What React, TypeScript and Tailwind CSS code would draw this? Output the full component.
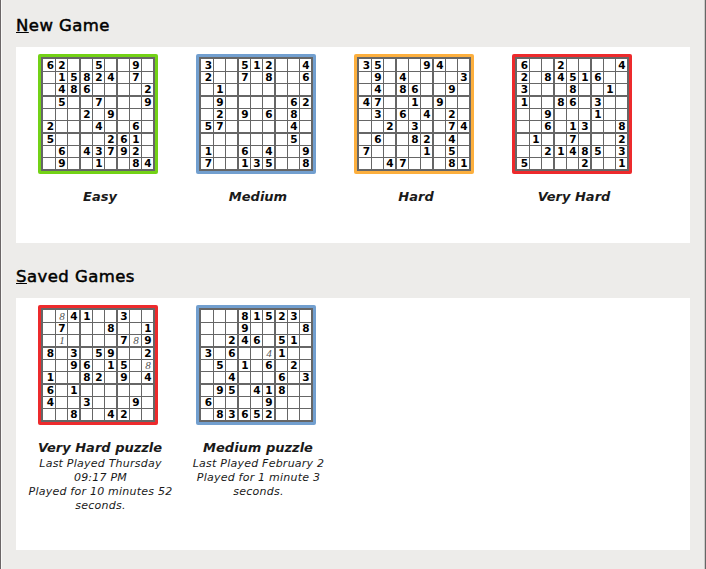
import { clsx } from "clsx";

type Game = {
  name: string;
  frame: string;
  rows: string[];
  details?: string[];
};

// Dots are empty squares; letters a-i are the player's own entries 1-9.
const newGames: Game[] = [
  {
    name: "Easy",
    frame: "bg-[#73d216]",
    rows: ["62..5..9.", ".15824.7.", ".486....2", ".5..7...9", "...2.9...", "2...4..6.", "5....261.", ".6.43792.", ".9..1..84"],
  },
  {
    name: "Medium",
    frame: "bg-[#729fcf]",
    rows: ["3..512..4", "2..7.8..6", ".1.......", ".9.....62", ".2.9.6.8.", "57.....4.", ".......5.", "1..6.4..9", "7..135..8"],
  },
  {
    name: "Hard",
    frame: "bg-[#fcaf3e]",
    rows: ["35...94..", ".9.4....3", ".4.86..9.", "47..1.9..", ".3.6.4.2.", "..2.3..74", ".6..82.4.", "7....1.5.", "..47...81"],
  },
  {
    name: "Very Hard",
    frame: "bg-[#ed2a2c]",
    rows: ["6..2....4", "2.84516..", "3...8..1.", "1..86.3..", "..9...1..", "..6.13..8", ".1..7...2", "..21485.3", "5....2..1"],
  },
];

const savedGames: Game[] = [
  {
    name: "Very Hard puzzle",
    frame: "bg-[#ed2a2c]",
    rows: [".h41..3..", ".7...8..1", ".a....7h9", "8.3.59..2", "..96.15.h", "1..82.9.4", "6.1......", "4..3...9.", "..8..42.."],
    details: ["Last Played Thursday", "09:17 PM", "Played for 10 minutes 52", "seconds."],
  },
  {
    name: "Medium puzzle",
    frame: "bg-[#729fcf]",
    rows: ["...81523.", "...9....8", "..246.51.", "3.6..d1..", ".5.1.6.2.", "..4...6.3", ".95.418..", "6....9...", ".83652..."],
    details: ["Last Played February 2", "Played for 1 minute 3", "seconds."],
  },
];

function Cell({ value, col, row }: { value: string; col: number; row: number }) {
  const given = value >= "1" && value <= "9";
  const entry = value >= "a" && value <= "i";
  return (
    <div
      className={clsx(
        "box-content flex shrink-0 items-center justify-center border-[#666] bg-white",
        col === 0 ? "w-[9px] pl-[3px]" : "w-[10px] pl-px",
        row === 0 && "h-[11px] pt-px",
        col === 8 ? "border-r-0" : col % 3 === 2 ? "border-r-2" : "border-r",
      )}
    >
      {given && <span className="text-[10.5px] leading-[11px] font-bold text-black">{value}</span>}
      {entry && (
        <span className="font-['Liberation_Serif',serif] text-[11px] leading-[11px] text-[#555] italic">
          {value.charCodeAt(0) - 96}
        </span>
      )}
    </div>
  );
}

function Board({ rows, frame }: { rows: string[]; frame: string }) {
  return (
    <div className={clsx("size-[120px] rounded-[2px] p-[3px]", frame)}>
      <div className="size-[114px] border-2 border-[#666]">
        {rows.map((row, r) => (
          <div
            key={r}
            className={clsx(
              "box-content flex border-[#666]",
              r === 0 ? "h-[12px]" : "h-[11px]",
              r === 8 ? "border-b-0" : r % 3 === 2 ? "border-b-2" : "border-b",
            )}
          >
            {row.split("").map((v, c) => (
              <Cell key={c} value={v} col={c} row={r} />
            ))}
          </div>
        ))}
      </div>
    </div>
  );
}

function GameItem({ game }: { game: Game }) {
  return (
    <div className="flex w-[158px] shrink-0 flex-col items-center text-[#1a1a1a]">
      <Board rows={game.rows} frame={game.frame} />
      <div className="mt-[15px] mb-px pl-1 text-[13px] leading-4 font-bold whitespace-nowrap italic">{game.name}</div>
      {game.details?.map((line) => (
        <div key={line} className="pl-[5px] text-[11px] leading-[14px] tracking-[0.23px] whitespace-nowrap italic">
          {line}
        </div>
      ))}
    </div>
  );
}

function Heading({ first, rest }: { first: string; rest: string }) {
  return (
    <h2 className="h-5 pt-px text-[16.5px] leading-5 tracking-[0.45px] text-black [-webkit-text-stroke:0.5px_black]">
      <span className="underline decoration-1 underline-offset-1">{first}</span>
      {rest}
    </h2>
  );
}

export default function App() {
  return (
    <div className="flex h-[569px] w-[706px] flex-col border-l border-[#6b6667] bg-[#edecea] font-['DejaVu_Sans',sans-serif]">
      <div className="flex h-full border-r border-l border-r-[#666] border-l-[#f8f8f7]">
        <main className="flex-1 border-r border-[#cacac8] pt-[15px] pr-[14px] pl-[14px]">
          <Heading first="N" rest="ew Game" />
          <section className="mt-3 flex h-[196px] bg-white pt-[7px] pl-[3px]">
            {newGames.map((g) => (
              <GameItem key={g.name} game={g} />
            ))}
          </section>
          <div className="mt-[23px]">
            <Heading first="S" rest="aved Games" />
          </div>
          <section className="mt-3 flex h-[252px] bg-white pt-[7px] pl-[3px]">
            {savedGames.map((g) => (
              <GameItem key={g.name} game={g} />
            ))}
          </section>
        </main>
      </div>
    </div>
  );
}
